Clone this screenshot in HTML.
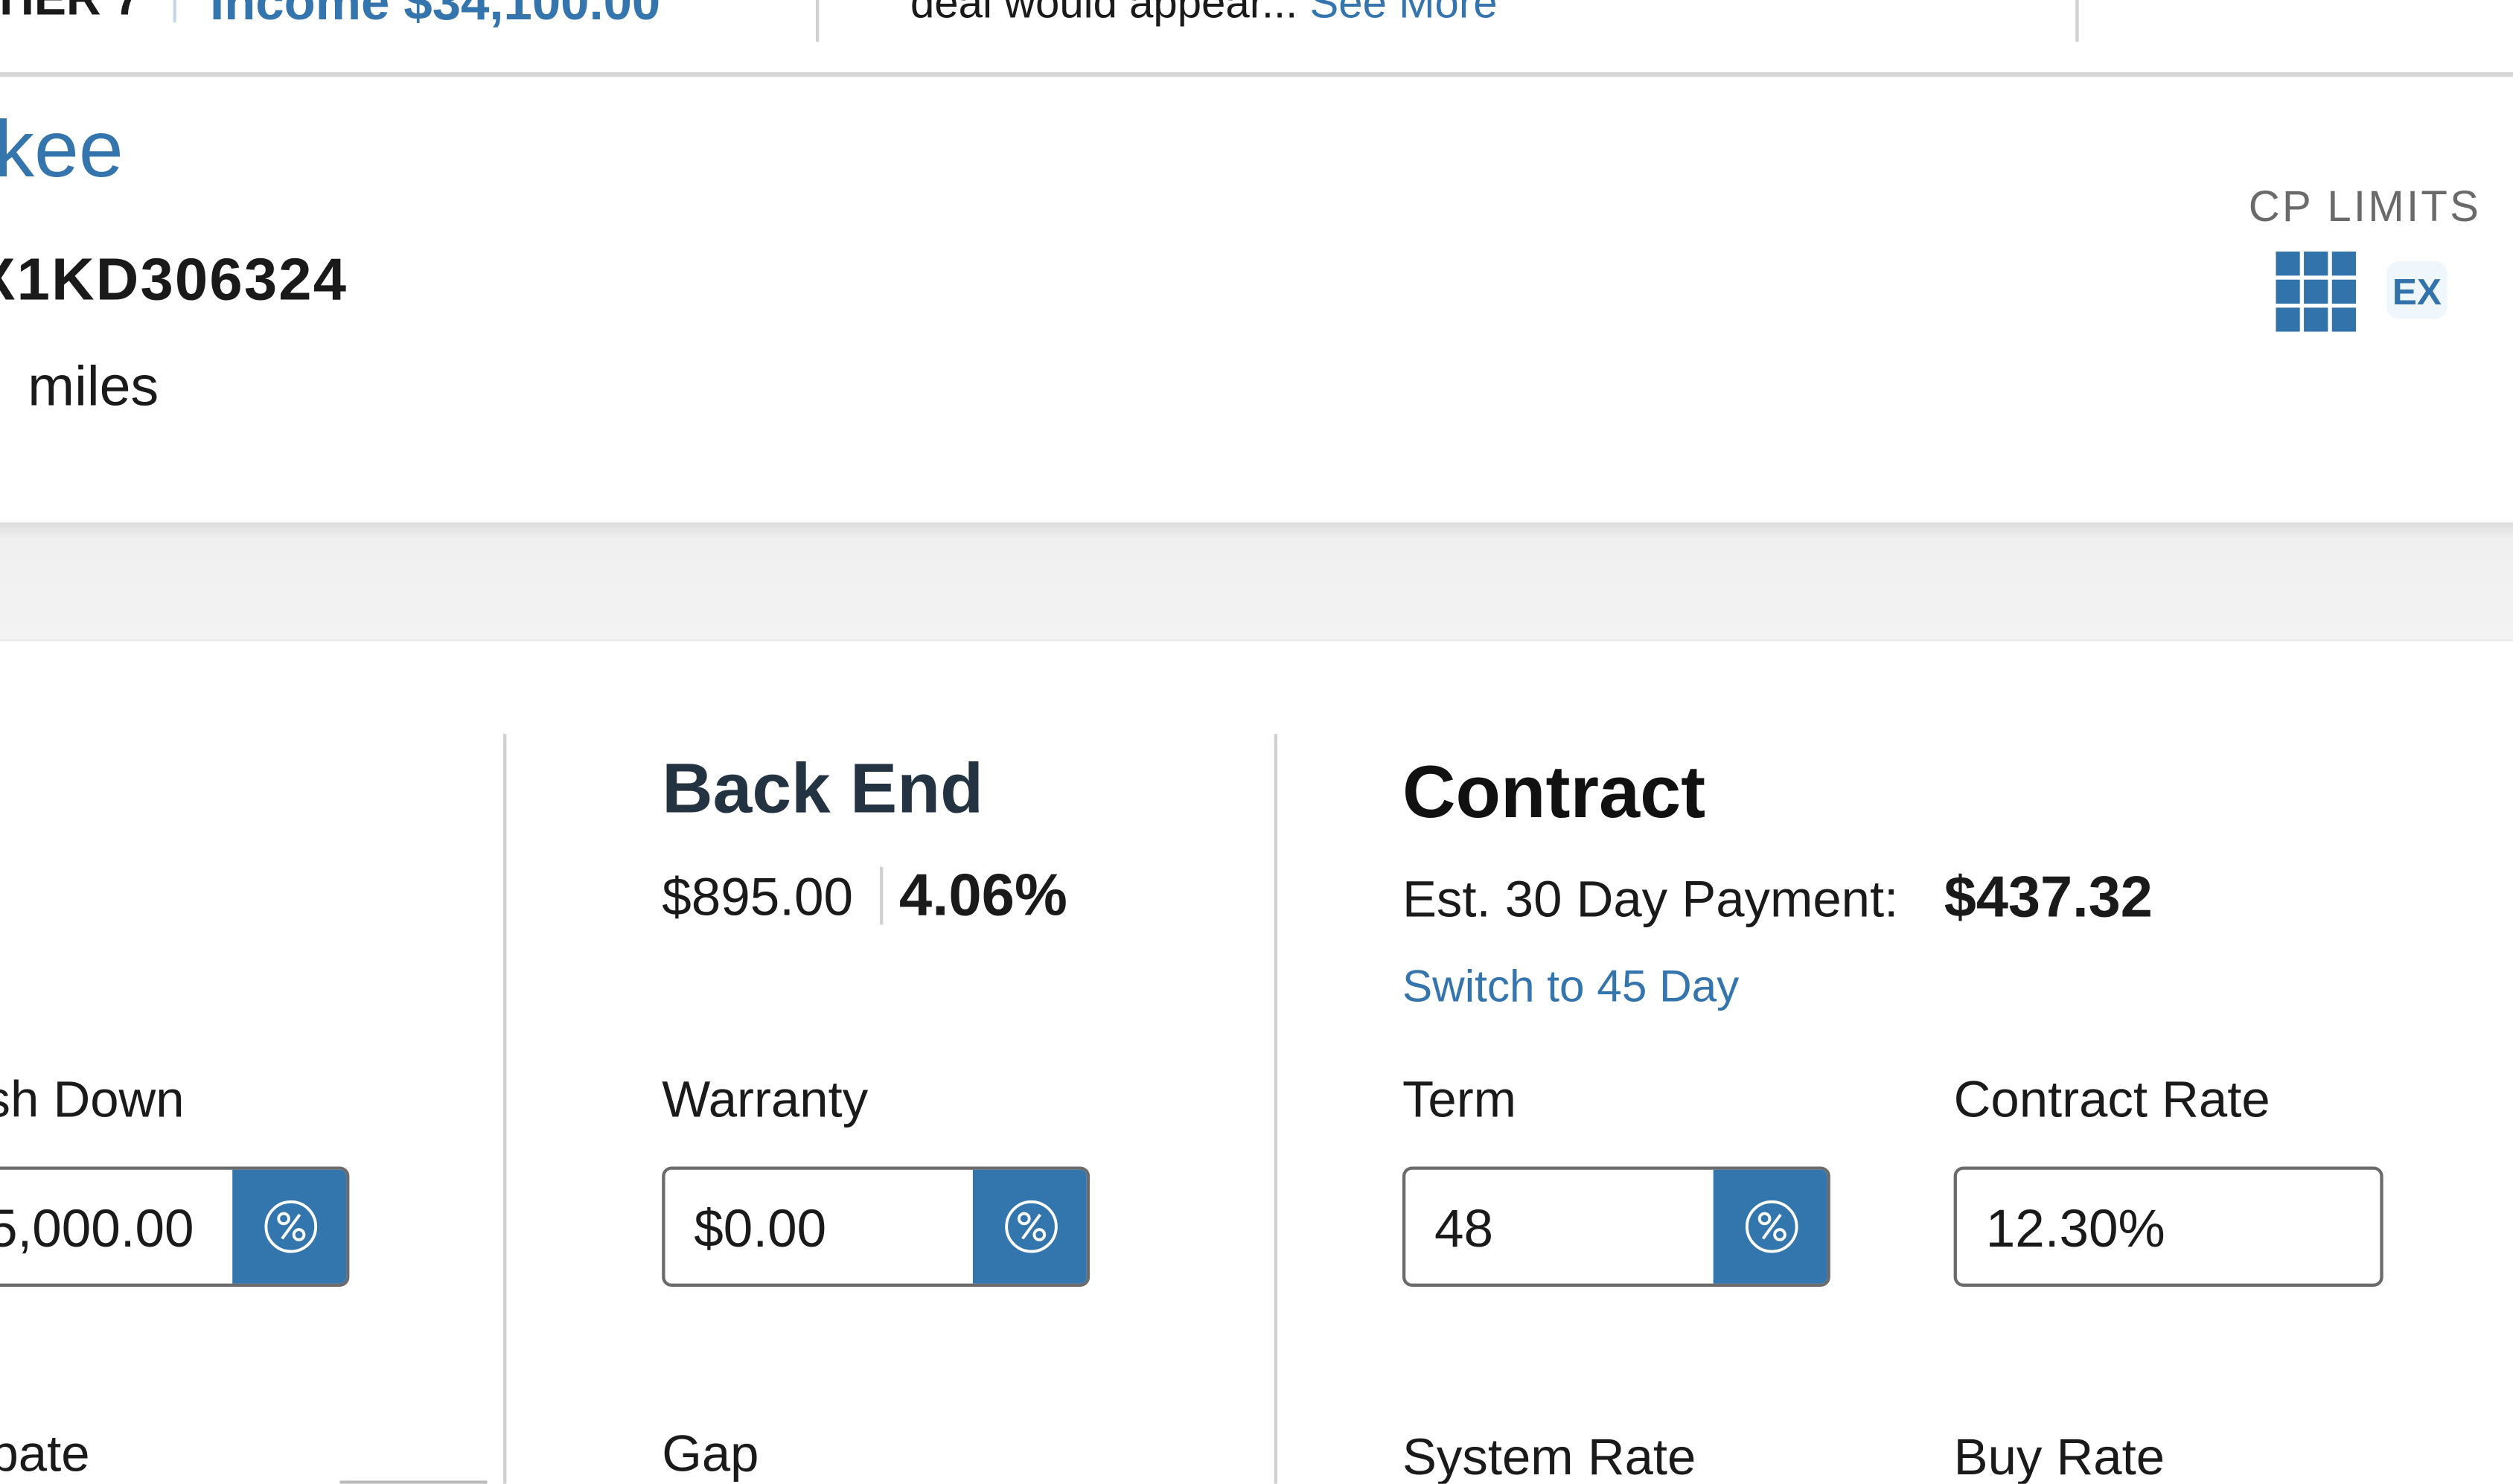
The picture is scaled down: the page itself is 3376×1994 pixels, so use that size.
<!DOCTYPE html>
<html><head><meta charset="utf-8"><style>
html,body{margin:0;padding:0;width:3376px;height:1994px;overflow:hidden;background:#fff}
#s{position:absolute;left:0;top:0;width:1568px;height:926px;transform:scale(2.1531);transform-origin:0 0;font-family:"Liberation Sans",sans-serif;color:#1a1a1a;overflow:hidden}
.a{position:absolute;white-space:nowrap}
.r{position:absolute;white-space:nowrap;text-align:right}
.blue{color:#3575ad}
.vd{position:absolute;width:2px;background:#d0d0d0}
.inp{position:absolute;height:71px;border:2px solid #6b6b6b;border-radius:6px;background:#fff;overflow:hidden}
.inp span{position:absolute;left:18px;top:18px;font-size:33px}
.btn{position:absolute;right:-2px;top:-2px;width:73px;height:75px;background:#3375ad;border-radius:0 6px 6px 0}
.btn svg{position:absolute;left:20px;top:21px}
.lab{position:absolute;font-size:32px;white-space:nowrap}
</style></head><body><div id="s">
<div class="r" style="right:1480px;top:-17px;font-size:30px;font-weight:bold">TIER 7</div>
<div style="position:absolute;left:108px;top:0;width:2px;height:14px;background:#c8d6e4"></div>
<div class="a blue" style="left:131px;top:-17px;font-size:32px;font-weight:bold">Income $34,100.00</div>
<div class="vd" style="left:509px;top:0;height:26px"></div>
<div class="a" style="left:568px;top:-13px;font-size:27px">deal would appear... <span class="blue">See More</span></div>
<div class="vd" style="left:1295px;top:0;height:26px"></div>
<div style="position:absolute;left:0;top:45px;width:1568px;height:3px;background:#d6d6d6"></div>
<div class="r blue" style="right:1491px;top:64px;font-size:50px">Milwaukee</div>
<div class="r" style="right:1351px;top:154px;font-size:37px;font-weight:bold;letter-spacing:1px">1FTEX1KD306324</div>
<div class="r" style="right:1469px;top:222px;font-size:35px">45,000&nbsp;&nbsp;miles</div>
<div class="a" style="left:1403px;top:114px;font-size:27px;color:#6a6a6a;letter-spacing:1.5px">CP LIMITS</div>
<svg class="a" style="left:1420px;top:157px" width="50" height="50" viewBox="0 0 50 50" fill="#3273ab">
<rect x="0" y="0" width="15" height="15"/><rect x="17.5" y="0" width="15" height="15"/><rect x="35" y="0" width="15" height="15"/>
<rect x="0" y="17.5" width="15" height="15"/><rect x="17.5" y="17.5" width="15" height="15"/><rect x="35" y="17.5" width="15" height="15"/>
<rect x="0" y="35" width="15" height="15"/><rect x="17.5" y="35" width="15" height="15"/><rect x="35" y="35" width="15" height="15"/></svg>
<div class="a" style="left:1489px;top:163px;width:38px;height:36px;background:#f0f7fc;border-radius:8px;color:#3273ab;font-weight:bold;font-size:23px;line-height:38px;text-align:center">EX</div>
<div style="position:absolute;left:0;top:326px;width:1568px;height:74px;background:linear-gradient(#dcdcdc 0,#f0f0f0 10px,#f3f3f3 100%)"></div>
<div style="position:absolute;left:0;top:399px;width:1568px;height:1px;background:#e6e6e6"></div>
<div class="vd" style="left:314px;top:458px;height:470px"></div>
<div class="vd" style="left:795px;top:458px;height:470px"></div>
<div class="a" style="left:413px;top:468px;font-size:44px;font-weight:bold;color:#243342">Back End</div>
<div class="a" style="left:413px;top:541px;font-size:33px">$895.00</div>
<div style="position:absolute;left:549px;top:541px;width:2px;height:36px;background:#d0d0d0"></div>
<div class="a" style="left:561px;top:538px;font-size:37px;font-weight:bold">4.06%</div>
<div class="a" style="left:875px;top:467px;font-size:46px;font-weight:bold;color:#111">Contract</div>
<div class="a" style="left:875px;top:543px;font-size:32px">Est. 30 Day Payment:</div>
<div class="a" style="left:1213px;top:539px;font-size:36px;font-weight:bold">$437.32</div>
<div class="a blue" style="left:875px;top:600px;font-size:28px">Switch to 45 Day</div>
<div class="r" style="right:1453px;top:668px;font-size:32px">Cash Down</div>
<div class="lab" style="left:413px;top:668px">Warranty</div>
<div class="lab" style="left:875px;top:668px">Term</div>
<div class="lab" style="left:1219px;top:668px">Contract Rate</div>
<div class="inp" style="left:-60px;top:728px;width:274px"><span style="left:auto;right:95px">$5,000.00</span><div class="btn"><svg width="33" height="33" viewBox="0 0 33 33" fill="none" stroke="#fff" stroke-width="1.8"><circle cx="16.5" cy="16.5" r="15.5"/><circle cx="12" cy="11.5" r="3.2"/><circle cx="21.5" cy="21.5" r="3.2"/><line x1="22" y1="9" x2="11" y2="24"/></svg></div></div>
<div class="inp" style="left:413px;top:728px;width:263px"><span>$0.00</span><div class="btn"><svg width="33" height="33" viewBox="0 0 33 33" fill="none" stroke="#fff" stroke-width="1.8"><circle cx="16.5" cy="16.5" r="15.5"/><circle cx="12" cy="11.5" r="3.2"/><circle cx="21.5" cy="21.5" r="3.2"/><line x1="22" y1="9" x2="11" y2="24"/></svg></div></div>
<div class="inp" style="left:875px;top:728px;width:263px"><span>48</span><div class="btn"><svg width="33" height="33" viewBox="0 0 33 33" fill="none" stroke="#fff" stroke-width="1.8"><circle cx="16.5" cy="16.5" r="15.5"/><circle cx="12" cy="11.5" r="3.2"/><circle cx="21.5" cy="21.5" r="3.2"/><line x1="22" y1="9" x2="11" y2="24"/></svg></div></div>
<div class="inp" style="left:1219px;top:728px;width:264px"><span>12.30%</span></div>
<div class="r" style="right:1512px;top:889px;font-size:32px">Rebate</div>
<div style="position:absolute;left:212px;top:924px;width:92px;height:2px;background:#bbb"></div>
<div class="lab" style="left:413px;top:889px">Gap</div>
<div class="lab" style="left:875px;top:891px">System Rate</div>
<div class="lab" style="left:1219px;top:891px">Buy Rate</div>
</div></body></html>
